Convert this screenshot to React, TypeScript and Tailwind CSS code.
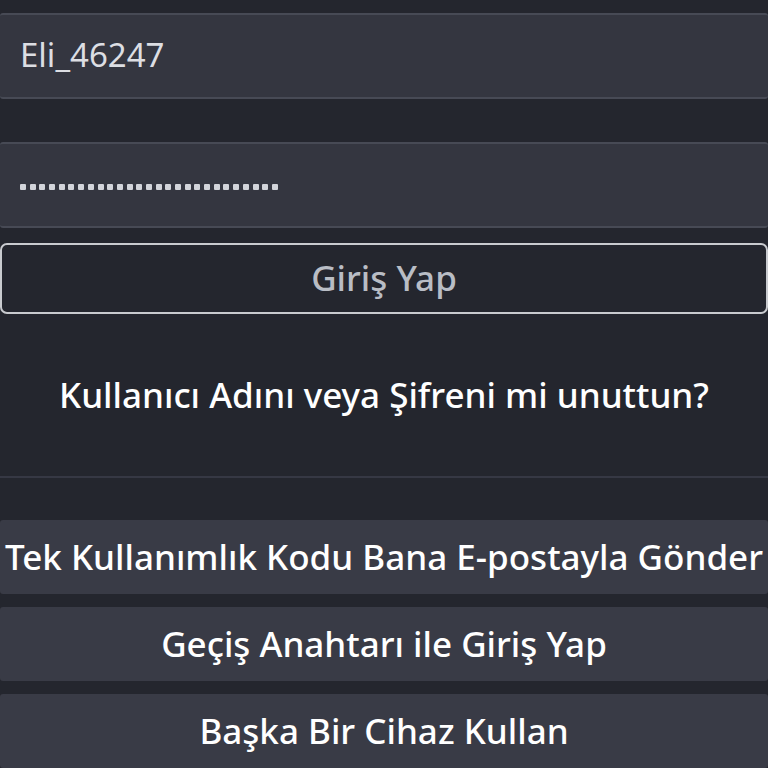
const font = { fontFamily: '"Noto Sans", "Open Sans", sans-serif' }

const Field = ({ children }: { children: React.ReactNode }) => (
  <div className="h-[86px] w-full flex items-center px-5 bg-[#343640] border-y-2 border-[#474a55] rounded-[3px]">
    {children}
  </div>
)

const ActionButton = ({ label }: { label: string }) => (
  <button className="h-[74px] w-full flex items-center justify-center bg-[#393b46] text-white text-[35px] font-medium whitespace-nowrap overflow-hidden rounded-[3px]">
    {label}
  </button>
)

export default function App() {
  const dots = Array.from({ length: 27 })

  return (
    <div className="w-[768px] h-[768px] overflow-hidden bg-[#24262e] flex flex-col pt-[13px]" style={font}>
      {/* Username */}
      <Field>
        <span className="text-[33px] text-[#dcdee3] leading-none -mt-[3px]">Eli_46247</span>
      </Field>

      <div className="h-[43px]" />

      {/* Password */}
      <Field>
        <div className="flex gap-[3.7px] mt-[4px]">
          {dots.map((_, i) => (
            <span key={i} className="w-[6px] h-[6px] bg-[#d2d4da] rounded-[1px]" />
          ))}
        </div>
      </Field>

      <div className="h-[15px]" />

      {/* Login button */}
      <button className="h-[72px] w-full flex items-center justify-center border-2 border-[#c9cbcf] rounded-[7px] text-[#b9bdc5] text-[35px] font-medium">
        Giriş Yap
      </button>

      {/* Forgot link */}
      <div className="h-[162px] flex items-center justify-center text-white text-[35px] font-medium whitespace-nowrap">
        Kullanıcı Adını veya Şifreni mi unuttun?
      </div>

      <div className="h-[2px] bg-[#363844]" />

      <div className="h-[42px]" />

      <div className="flex flex-col gap-[13px]">
        <ActionButton label="Tek Kullanımlık Kodu Bana E-postayla Gönder" />
        <ActionButton label="Geçiş Anahtarı ile Giriş Yap" />
        <ActionButton label="Başka Bir Cihaz Kullan" />
      </div>
    </div>
  )
}
